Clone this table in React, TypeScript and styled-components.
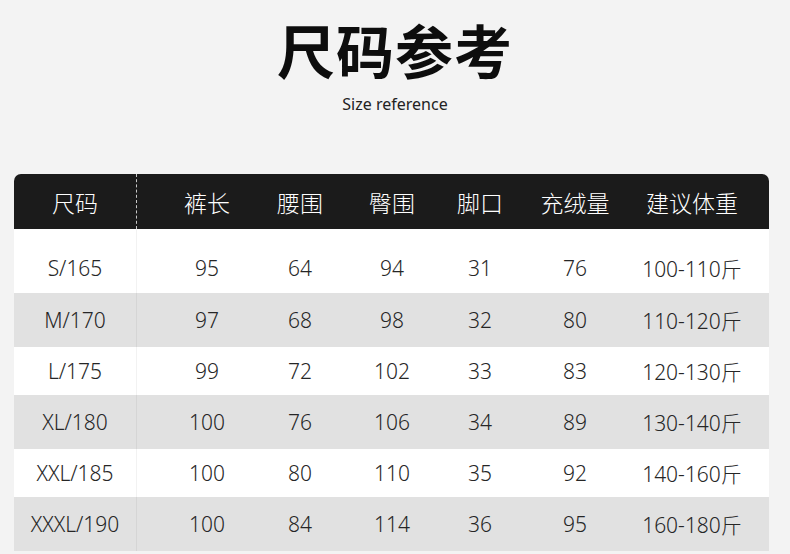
import React from "react";
import styled, { createGlobalStyle } from "styled-components";

interface SizeRow {
  size: string;
  values: string[];
}

const headers = ["裤长", "腰围", "臀围", "脚口", "充绒量", "建议体重"];

const rows: SizeRow[] = [
  { size: "S/165", values: ["95", "64", "94", "31", "76", "100-110斤"] },
  { size: "M/170", values: ["97", "68", "98", "32", "80", "110-120斤"] },
  { size: "L/175", values: ["99", "72", "102", "33", "83", "120-130斤"] },
  { size: "XL/180", values: ["100", "76", "106", "34", "89", "130-140斤"] },
  { size: "XXL/185", values: ["100", "80", "110", "35", "92", "140-160斤"] },
  { size: "XXXL/190", values: ["100", "84", "114", "36", "95", "160-180斤"] },
];

const GlobalStyle = createGlobalStyle`
  body {
    margin: 0;
    background: #f3f3f3;
    font-family: "Noto Sans", "Noto Sans CJK SC", sans-serif;
  }
`;

const App: React.FC = () => {
  return (
    <>
      <GlobalStyle />
      <Page>
        <Heading>
          <Title>尺码参考</Title>
          <Subtitle>Size reference</Subtitle>
        </Heading>
        <Table>
          <HeadRow>
            <HeadCell first>尺码</HeadCell>
            {headers.map((h, i) => (
              <HeadCell key={h} second={i === 0}>
                {h}
              </HeadCell>
            ))}
          </HeadRow>
          {rows.map((row, idx) => (
            <BodyRow key={row.size} shaded={idx % 2 === 1} top={idx === 0}>
              <Cell first top={idx === 0}>
                {row.size}
              </Cell>
              {row.values.map((v, i) => (
                <Cell key={i} second={i === 0} top={idx === 0}>
                  {v}
                </Cell>
              ))}
            </BodyRow>
          ))}
        </Table>
      </Page>
    </>
  );
};

export default App;

interface ICell {
  first?: boolean;
  second?: boolean;
  top?: boolean;
}

interface IRow {
  shaded: boolean;
  top: boolean;
}

const Page = styled.div`
  width: 790px;
  height: 554px;
  overflow: hidden;
`;

const Heading = styled.div`
  display: flex;
  flex-direction: column;
  align-items: center;
  padding-top: 14px;
  height: 156px;
  box-sizing: border-box;
`;

const Title = styled.h1`
  margin: 0;
  font-family: "Noto Sans CJK SC", sans-serif;
  font-size: 58px;
  line-height: 70px;
  font-weight: 700;
  letter-spacing: 1px;
  color: #0d0d0d;
`;

const Subtitle = styled.div`
  margin-top: 10px;
  font-family: "Noto Sans", sans-serif;
  font-size: 16px;
  line-height: 20px;
  color: #222;
`;

const Table = styled.div`
  margin: 18px 14px 0;
  width: 755px;
`;

const columns = "123px 116px 94px 90px 86px 104px 130px";

const HeadRow = styled.div`
  display: grid;
  grid-template-columns: ${columns};
  height: 55px;
  background: #1b1b1b;
  border-radius: 7px 7px 0 0;
  color: #fff;
  font-family: "Noto Sans CJK SC", sans-serif;
  font-size: 23px;
  font-weight: 300;
`;

const HeadCell = styled.div<ICell>`
  display: flex;
  align-items: center;
  justify-content: center;
  padding-left: ${(props) => (props.second ? "24px" : "0")};
  border-right: ${(props) => (props.first ? "1px dashed #c8c8c8" : "none")};
`;

const BodyRow = styled.div<IRow>`
  display: grid;
  grid-template-columns: ${columns};
  height: ${(props) => (props.top ? "64px" : props.shaded ? "54px" : "48px")};
  background: ${(props) => (props.shaded ? "#e1e1e1" : "#ffffff")};
  color: #262626;
  font-family: "Noto Sans", "Noto Sans CJK SC", sans-serif;
  font-size: 21px;
  font-weight: 300;
`;

const Cell = styled.div<ICell>`
  display: flex;
  align-items: center;
  justify-content: center;
  box-sizing: border-box;
  padding-top: ${(props) => (props.top ? "14px" : "0")};
  padding-left: ${(props) => (props.second ? "24px" : "0")};
  border-right: ${(props) => (props.first ? "1px solid rgba(0, 0, 0, 0.05)" : "none")};
`;
